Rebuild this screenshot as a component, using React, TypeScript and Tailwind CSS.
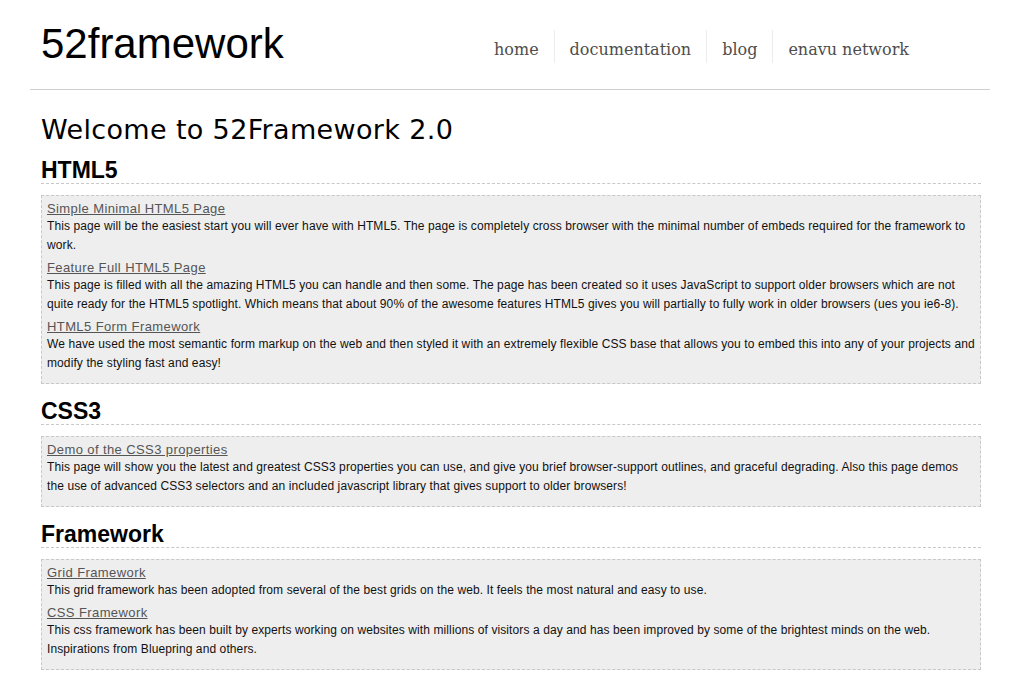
type Entry = { title: string; body: string };
type Section = { heading: string; entries: Entry[] };

const nav = ["home", "documentation", "blog", "enavu network"];

const sections: Section[] = [
  {
    heading: "HTML5",
    entries: [
      {
        title: "Simple Minimal HTML5 Page",
        body: "This page will be the easiest start you will ever have with HTML5. The page is completely cross browser with the minimal number of embeds required for the framework to work.",
      },
      {
        title: "Feature Full HTML5 Page",
        body: "This page is filled with all the amazing HTML5 you can handle and then some. The page has been created so it uses JavaScript to support older browsers which are not quite ready for the HTML5 spotlight. Which means that about 90% of the awesome features HTML5 gives you will partially to fully work in older browsers (ues you ie6-8).",
      },
      {
        title: "HTML5 Form Framework",
        body: "We have used the most semantic form markup on the web and then styled it with an extremely flexible CSS base that allows you to embed this into any of your projects and modify the styling fast and easy!",
      },
    ],
  },
  {
    heading: "CSS3",
    entries: [
      {
        title: "Demo of the CSS3 properties",
        body: "This page will show you the latest and greatest CSS3 properties you can use, and give you brief browser-support outlines, and graceful degrading. Also this page demos the use of advanced CSS3 selectors and an included javascript library that gives support to older browsers!",
      },
    ],
  },
  {
    heading: "Framework",
    entries: [
      {
        title: "Grid Framework",
        body: "This grid framework has been adopted from several of the best grids on the web. It feels the most natural and easy to use.",
      },
      {
        title: "CSS Framework",
        body: "This css framework has been built by experts working on websites with millions of visitors a day and has been improved by some of the brightest minds on the web. Inspirations from Bluepring and others.",
      },
    ],
  },
];

export default function App() {
  return (
    <div className="min-h-[686px] bg-white font-['Liberation_Sans',Arial,sans-serif] text-[#111]">
      <div className="mx-auto w-[960px]">
        <header className="flex h-[90px] items-start border-b border-[#cfcfcf] pt-[20px] pl-[11px]">
          <h1 className="text-[42px] leading-[48px] font-normal text-black">52framework</h1>
          <nav className="ml-auto mr-[66px] mt-[10px] flex font-['DejaVu_Serif',Georgia,serif] text-[16px] text-[#4d4d4d]">
            {nav.map((item, i) => (
              <a
                key={item}
                href="#"
                className={
                  "block h-[33px] px-[15px] pt-[6px] leading-[27px] " +
                  (i > 0 ? "border-l border-[#ececec]" : "")
                }
              >
                {item}
              </a>
            ))}
          </nav>
        </header>

        <main className="pl-[11px] pr-[9px]">
          <h1 className="mt-[24px] font-['DejaVu_Sans',sans-serif] text-[27px] leading-[32px] font-normal tracking-[0.35px] text-black">
            Welcome to 52Framework 2.0
          </h1>

          {sections.map((s, i) => (
            <section key={s.heading}>
              <h2
                className={
                  "h-[27px] border-b border-dashed border-[#c8c8c8] text-[23px] leading-[26px] font-bold text-black " +
                  (i === 0 ? "mt-[11px]" : "mt-[14px]")
                }
              >
                {s.heading}
              </h2>
              <div className="mt-[11px] border border-dashed border-[#c8c8c8] bg-[#eeeeee] px-[5px] pt-[5px]">
                {s.entries.map((e) => (
                  <div key={e.title}>
                    <a href="#" className="block text-[13px] leading-[16px] tracking-[0.4px] text-[#555] underline">
                      {e.title}
                    </a>
                    <p className="mb-[5px] text-[12px] leading-[19px] tracking-[0.1px] text-[#111]">{e.body}</p>
                  </div>
                ))}
                <div className="h-[5px]" />
              </div>
            </section>
          ))}
        </main>
      </div>
    </div>
  );
}
